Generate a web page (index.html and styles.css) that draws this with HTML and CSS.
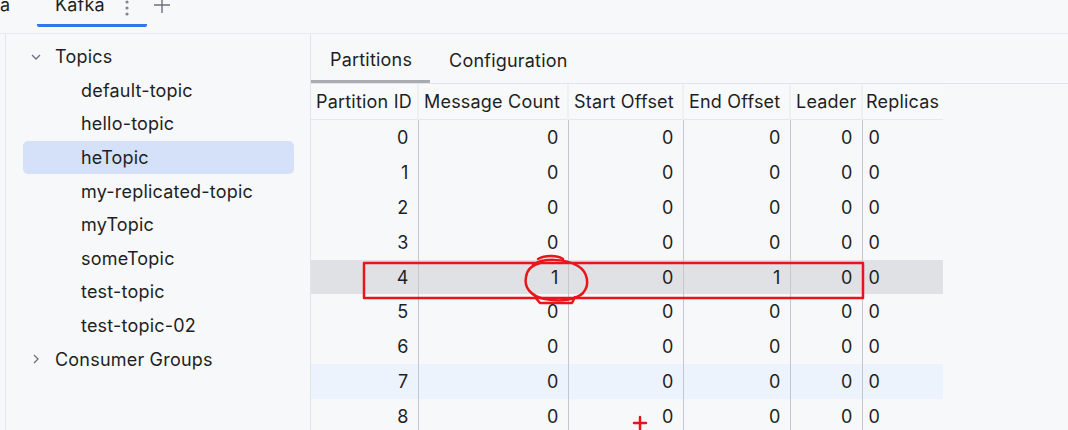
FILE: index.html
```html
<!DOCTYPE html>
<html>
<head>
    <title>Kafka</title>
    <link rel="stylesheet" href="styles.css">
</head>
<body>
    <div class="topbar">
        <span class="tab-prev">ka</span>
        <div class="tab active">
            <span>Kafka</span>
            <svg class="dots" width="6" height="16" viewBox="0 0 6 16">
                <circle cx="3" cy="2" r="1.6"/>
                <circle cx="3" cy="8" r="1.6"/>
                <circle cx="3" cy="14" r="1.6"/>
            </svg>
        </div>
        <svg class="plus" width="18" height="18" viewBox="0 0 18 18">
            <path d="M9 1v16M1 9h16"/>
        </svg>
    </div>

    <div class="main">
        <div class="sidebar">
            <div class="tree">
                <div class="node">
                    <svg class="chev" width="12" height="12" viewBox="0 0 12 12"><path d="M2 4l4 4 4-4"/></svg>
                    <span>Topics</span>
                </div>
                <div class="leaf">default-topic</div>
                <div class="leaf">hello-topic</div>
                <div class="leaf selected">heTopic</div>
                <div class="leaf">my-replicated-topic</div>
                <div class="leaf">myTopic</div>
                <div class="leaf">someTopic</div>
                <div class="leaf">test-topic</div>
                <div class="leaf">test-topic-02</div>
                <div class="node">
                    <svg class="chev" width="12" height="12" viewBox="0 0 12 12"><path d="M4 2l4 4-4 4"/></svg>
                    <span>Consumer Groups</span>
                </div>
            </div>
        </div>

        <div class="content">
            <div class="subtabs">
                <div class="subtab active">Partitions</div>
                <div class="subtab">Configuration</div>
            </div>
            <table class="grid">
                <colgroup>
                    <col class="c-id">
                    <col class="c-count">
                    <col class="c-start">
                    <col class="c-end">
                    <col class="c-leader">
                    <col class="c-rep">
                </colgroup>
                <thead>
                    <tr>
                        <th>Partition ID</th>
                        <th>Message Count</th>
                        <th>Start Offset</th>
                        <th>End Offset</th>
                        <th>Leader</th>
                        <th>Replicas</th>
                    </tr>
                </thead>
                <tbody>
                    <tr><td>0</td><td>0</td><td>0</td><td>0</td><td>0</td><td>0</td></tr>
                    <tr><td>1</td><td>0</td><td>0</td><td>0</td><td>0</td><td>0</td></tr>
                    <tr><td>2</td><td>0</td><td>0</td><td>0</td><td>0</td><td>0</td></tr>
                    <tr><td>3</td><td>0</td><td>0</td><td>0</td><td>0</td><td>0</td></tr>
                    <tr class="picked"><td>4</td><td>1</td><td>0</td><td>1</td><td>0</td><td>0</td></tr>
                    <tr><td>5</td><td>0</td><td>0</td><td>0</td><td>0</td><td>0</td></tr>
                    <tr><td>6</td><td>0</td><td>0</td><td>0</td><td>0</td><td>0</td></tr>
                    <tr class="hover"><td>7</td><td>0</td><td>0</td><td>0</td><td>0</td><td>0</td></tr>
                    <tr><td>8</td><td>0</td><td>0</td><td>0</td><td>0</td><td>0</td></tr>
                </tbody>
            </table>
        </div>
    </div>

    <!-- pen marks drawn over the table -->
    <svg class="marks" width="1068" height="430" viewBox="0 0 1068 430">
        <rect x="364" y="263" width="499" height="35"/>
        <path d="M538 259c7-4 19-4 25 0"/>
        <path d="M533 265c9-7 32-7 45 1c10 6 12 19 5 27c-7 7-23 9-38 6c-15-3-21-12-19-22c1-7 6-12 14-14"/>
        <path d="M535 297l5 6h32l3-6"/>
        <path d="M634 423h12M640 417v12"/>
    </svg>
</body>
</html>
```

FILE: styles.css
```css
body {
    margin: 0;
    background: #f7f8fa;
    color: #1e1f22;
    font-family: Inter, "Noto Sans", sans-serif;
    font-size: 18px;
    letter-spacing: 0.2px;
    width: 1068px;
    height: 430px;
    overflow: hidden;
}

.topbar {
    height: 33px;
    border-bottom: 1px solid #e8e9ec;
    display: flex;
    align-items: flex-start;
    position: relative;
}
.tab-prev {
    margin-left: -10px;
    margin-top: -6px;
    width: 47px;
}
.tab {
    display: flex;
    align-items: flex-start;
    gap: 19px;
    padding: 0 17px 0 18px;
    height: 33px;
    box-sizing: border-box;
    margin-top: -6px;
}
.tab.active {
    border-bottom: 3px solid #3574f0;
    border-radius: 0 0 2px 2px;
}
.dots {
    fill: #818594;
    margin-top: 6px;
}
.plus {
    stroke: #6c707e;
    stroke-width: 1.4;
    fill: none;
    margin: -4px 0 0 6px;
}

.main {
    display: flex;
    height: 396px;
}

.sidebar {
    width: 304px;
    margin-left: 5px;
    border-left: 1px solid #e6e7ea;
    border-right: 1px solid #e3e4e7;
}
.tree {
    padding: 6px 16px 0 17px;
}
.node, .leaf {
    height: 33.6px;
    display: flex;
    align-items: center;
}
.node {
    padding-left: 7px;
    gap: 13px;
}
.chev {
    stroke: #6c707e;
    stroke-width: 1.3;
    fill: none;
}
.leaf {
    padding-left: 58px;
    border-radius: 5px;
}
.leaf.selected {
    background: #d5e1f8;
}

.content {
    flex: 1;
}
.subtabs {
    display: flex;
    height: 49px;
    border-bottom: 1px solid #e3e4e7;
}
.subtab {
    padding: 4px 18px 0 19px;
    display: flex;
    align-items: center;
    box-sizing: border-box;
    height: 49px;
}
.subtab.active {
    border-bottom: 3px solid #a8abb0;
}

.grid {
    border-collapse: collapse;
    table-layout: fixed;
    width: 632px;
}
.c-id { width: 107px; }
.c-count { width: 150px; }
.c-start { width: 115px; }
.c-end { width: 107px; }
.c-leader { width: 72px; }
.c-rep { width: 81px; }
.grid th {
    font-weight: normal;
    text-align: left;
    height: 35px;
    padding: 0 5px;
    white-space: nowrap;
    overflow: hidden;
    background: #f8f9fb;
    border-right: 2px solid #eff0f2;
    border-bottom: 1px solid #e6e7ea;
}
.grid th:last-child {
    border-right: none;
    padding: 0 2px 0 3px;
}
.grid td {
    height: 34.9px;
    padding: 0 9px 0 6px;
    text-align: right;
    border-right: 1px solid #c4c7cc;
}
.grid td:last-child {
    text-align: left;
    border-right: none;
}
.grid tr.picked td {
    background: #dfe1e5;
}
.grid tr.hover td {
    background: #edf3fd;
}

.marks {
    position: absolute;
    left: 0;
    top: 0;
    fill: none;
    stroke: #e8161a;
    stroke-width: 2.5;
    stroke-linecap: round;
    stroke-linejoin: round;
}
```
